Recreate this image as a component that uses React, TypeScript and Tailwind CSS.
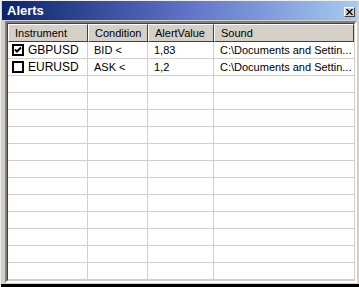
import React from "react";

const rows = [
  { checked: true, inst: "GBPUSD", cond: "BID <", val: "1,83", sound: "C:\\Documents and Settin..." },
  { checked: false, inst: "EURUSD", cond: "ASK <", val: "1,2", sound: "C:\\Documents and Settin..." },
];

function Check({ checked }: { checked: boolean }) {
  return (
    <div className="w-[12px] h-[12px] border-2 border-black bg-white flex items-center justify-center shrink-0">
      {checked && (
        <svg width="8" height="8" viewBox="0 0 8 8">
          <path d="M1 3.5 L3 5.5 L7 1.5" stroke="black" strokeWidth="2" fill="none" />
        </svg>
      )}
    </div>
  );
}

const cols = ["w-[80px]", "w-[60px]", "w-[66px]", "flex-1"];

export default function App() {
  const empty = Array.from({ length: 12 });
  return (
    <div
      className="w-[359px] h-[287px] bg-[#d4d0c8] flex flex-col overflow-hidden border-l border-t border-l-[#eeeeee] border-t-[#eeeeee]"
      style={{ fontFamily: '"Liberation Sans", Arial, sans-serif' }}
    >
      <div className="ml-[1px] mr-[2px] h-[19px] flex items-center justify-between bg-gradient-to-r from-[#0a246a] via-[#5d6fc4] to-[#a6caf0]">
        <span className="text-white font-bold text-[13px] pl-[5px] leading-none">Alerts</span>
        <div className="mr-[2px] mt-[3px] w-[11px] h-[10px] bg-[#d4d0c8] border border-t-white border-l-white border-b-[#404040] border-r-[#404040] flex items-center justify-center">
          <svg width="7" height="6" viewBox="0 0 7 6">
            <path d="M0.5 0 L6.5 6 M6.5 0 L0.5 6" stroke="black" strokeWidth="1.3" />
          </svg>
        </div>
      </div>
      <div className="h-[1px]" />
      <div className="ml-[4px] mr-[2px] h-[262px] border-2 border-t-[#808080] border-l-[#808080] border-b-white border-r-white">
        <div className="h-full bg-white border border-t-[#404040] border-l-[#404040] border-b-[#d4d0c8] border-r-[#d4d0c8] overflow-hidden flex flex-col">
          <div className="flex h-[18px] shrink-0 bg-[#d4d0c8]">
            {["Instrument", "Condition", "AlertValue", "Sound"].map((h, i) => (
              <div
                key={h}
                className={`${cols[i]} h-full border border-t-white border-l-white border-b-[#404040] border-r-[#404040] flex items-center pl-[6px] text-[11px] text-black leading-none`}
              >
                {h}
              </div>
            ))}
          </div>
          {rows.map((r) => (
            <div key={r.inst} className="flex h-[17px] shrink-0 border-b border-[#d4d0c8] text-[11px] text-black leading-none">
              <div className={`${cols[0]} flex items-center gap-[4px] pl-[4px] border-r border-[#d4d0c8]`}>
                <Check checked={r.checked} />
                <span className="text-[12px]">{r.inst}</span>
              </div>
              <div className={`${cols[1]} flex items-center pl-[6px] border-r border-[#d4d0c8]`}>{r.cond}</div>
              <div className={`${cols[2]} flex items-center pl-[6px] border-r border-[#d4d0c8]`}>{r.val}</div>
              <div className={`${cols[3]} flex items-center pl-[6px] whitespace-nowrap overflow-hidden`}>{r.sound}</div>
            </div>
          ))}
          {empty.map((_, i) => (
            <div key={i} className="flex h-[17px] shrink-0 border-b border-[#d4d0c8]">
              <div className={`${cols[0]} border-r border-[#d4d0c8]`} />
              <div className={`${cols[1]} border-r border-[#d4d0c8]`} />
              <div className={`${cols[2]} border-r border-[#d4d0c8]`} />
              <div className={cols[3]} />
            </div>
          ))}
        </div>
      </div>
      <div className="flex-1" />
      <div className="h-[3px] bg-black" />
    </div>
  );
}
